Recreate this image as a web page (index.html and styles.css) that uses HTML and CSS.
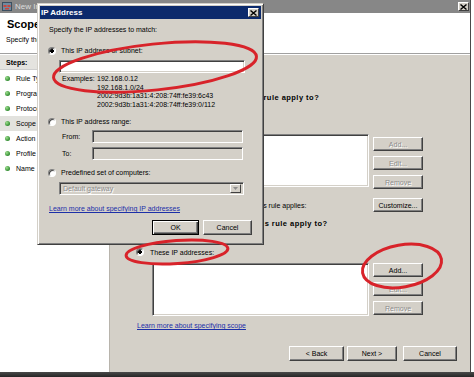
FILE: index.html
```html
<!DOCTYPE html>
<html lang="en">
<head>
    <meta charset="UTF-8">
    <title>New Inbound Rule Wizard - IP Address</title>
    <link rel="stylesheet" href="styles.css">
</head>
<body>
<div class="desk">
    <div class="win">
        <div class="win-title">
            <svg class="app-icon" width="10" height="9" viewBox="0 0 10 9">
                <rect x="0.5" y="0.5" width="9" height="8" fill="#6f8aa0" stroke="#3b4f60"/>
                <rect x="1.5" y="3" width="3" height="2" fill="#c8463c"/>
                <rect x="5.5" y="3" width="3" height="2" fill="#c8463c"/>
                <rect x="3" y="6" width="4" height="1.5" fill="#c8463c"/>
            </svg>
            <span class="win-caption">New Inbound Rule Wizard</span>
            <span class="win-close">
                <svg width="7" height="6" viewBox="0 0 7 6"><path d="M0.5 0.5L6.5 5.5M6.5 0.5L0.5 5.5" stroke="#000" stroke-width="1.4"/></svg>
            </span>
        </div>
        <div class="win-head">
            <div class="head-title">Scope</div>
            <div class="head-sub">Specify the local and remote IP addresses to which this rule applies.</div>
        </div>
        <div class="win-body">
            <div class="steps">
                <div class="steps-head">Steps:</div>
                <ul class="step-list">
                    <li><span class="dot"></span>Rule Type</li>
                    <li><span class="dot"></span>Program</li>
                    <li><span class="dot"></span>Protocol and Ports</li>
                    <li class="current"><span class="dot"></span>Scope</li>
                    <li><span class="dot"></span>Action</li>
                    <li><span class="dot"></span>Profile</li>
                    <li><span class="dot"></span>Name</li>
                </ul>
            </div>
            <div class="pane">
                <div class="q">Which local IP addresses does this rule apply to?</div>
                <div class="choices">
                    <div class="opt"><span class="radio on"></span>Any IP address</div>
                    <div class="opt"><span class="radio"></span>These IP addresses:</div>
                </div>
                <div class="addr-row">
                    <div class="field addr-list"></div>
                    <div class="side-btns top">
                        <button class="btn off">Add...</button>
                        <button class="btn off">Edit...</button>
                        <button class="btn off">Remove</button>
                    </div>
                </div>
                <div class="custom-row">
                    <span>Customize the interface types to which this rule applies:</span>
                    <button class="btn">Customize...</button>
                </div>
                <div class="q q2">Which remote IP addresses does this rule apply to?</div>
                <div class="choices low">
                    <div class="opt"><span class="radio"></span>Any IP address</div>
                    <div class="opt"><span class="radio on"></span>These IP addresses:</div>
                </div>
                <div class="addr-row">
                    <div class="field addr-list"></div>
                    <div class="side-btns">
                        <button class="btn">Add...</button>
                        <button class="btn off">Edit...</button>
                        <button class="btn off">Remove</button>
                    </div>
                </div>
                <a class="link pane-link" href="#">Learn more about specifying scope</a>
                <div class="nav">
                    <button class="btn nav-back">&lt; Back</button>
                    <button class="btn nav-next">Next &gt;</button>
                    <button class="btn nav-cancel">Cancel</button>
                </div>
            </div>
        </div>
    </div>
    <div class="bottom-strip"></div>

    <!-- IP Address dialog on top of the wizard -->
    <div class="dialog">
        <div class="dlg-title">
            <span>IP Address</span>
            <span class="dlg-close">
                <svg width="7" height="6" viewBox="0 0 7 6"><path d="M0.5 0.5L6.5 5.5M6.5 0.5L0.5 5.5" stroke="#000" stroke-width="1.4"/></svg>
            </span>
        </div>
        <div class="dlg-body">
            <div class="intro">Specify the IP addresses to match:</div>
            <div class="opt dlg-opt first"><span class="radio on"></span>This IP address or subnet:</div>
            <div class="field subnet"></div>
            <div class="examples">
                <span>Examples:</span><span>192.168.0.12</span>
                <span></span><span>192.168.1.0/24</span>
                <span></span><span>2002:9d3b:1a31:4:208:74ff:fe39:6c43</span>
                <span></span><span>2002:9d3b:1a31:4:208:74ff:fe39:0/112</span>
            </div>
            <div class="opt dlg-opt"><span class="radio"></span>This IP address range:</div>
            <div class="range-row">
                <span class="range-label">From:</span>
                <div class="field dim range-input"></div>
            </div>
            <div class="range-row">
                <span class="range-label">To:</span>
                <div class="field dim range-input"></div>
            </div>
            <div class="opt dlg-opt"><span class="radio"></span>Predefined set of computers:</div>
            <div class="field dim combo">
                <span class="combo-text">Default gateway</span>
                <span class="combo-btn">
                    <svg width="5" height="3" viewBox="0 0 5 3"><path d="M0 0H5L2.5 3Z" fill="#8c8c8c"/></svg>
                </span>
            </div>
            <a class="link dlg-link" href="#">Learn more about specifying IP addresses</a>
            <div class="dlg-btns">
                <button class="btn btn-default ok">OK</button>
                <button class="btn cancel">Cancel</button>
            </div>
        </div>
    </div>

    <!-- red marker rings -->
    <svg class="marks" width="474" height="377" viewBox="0 0 474 377">
        <ellipse cx="155" cy="67" rx="102" ry="23" transform="rotate(-6 155 67)"/>
        <ellipse cx="177" cy="252" rx="51" ry="11.5" transform="rotate(-4 177 252)"/>
        <ellipse cx="402" cy="266" rx="40" ry="21" transform="rotate(-10 402 266)"/>
    </svg>
</div>
</body>
</html>
```

FILE: styles.css
```css
* {
    box-sizing: border-box;
}
body {
    margin: 0;
    background: #fff;
    font-family: "Liberation Sans", Arial, sans-serif;
    font-size: 7px;
    color: #000;
}
.desk {
    position: relative;
    width: 474px;
    height: 377px;
    overflow: hidden;
}
/* background wizard window */
.win {
    width: 471px;
    height: 372px;
    display: flex;
    flex-direction: column;
    background: #d4d0c8;
    border-right: 1px solid #4a4a4a;
}
.win-title {
    height: 13px;
    background: #878787;
    display: flex;
    align-items: center;
    padding: 0 1px 0 2px;
}
.app-icon {
    flex: none;
}
.win-caption {
    flex: 1;
    margin-left: 3px;
    color: #dedede;
    font-size: 8px;
    white-space: nowrap;
}
.win-close, .dlg-close {
    width: 11px;
    height: 9px;
    display: flex;
    align-items: center;
    justify-content: center;
    background: #d4d0c8;
    border: 1px solid;
    border-color: #fff #404040 #404040 #fff;
}
.win-head {
    height: 41px;
    background: #fff;
    border-bottom: 1px solid #a0a0a0;
    padding: 5px 6px 0;
}
.head-title {
    font-size: 11px;
    font-weight: bold;
    line-height: 12px;
    padding-left: 1px;
}
.head-sub {
    margin-top: 5px;
    line-height: 9px;
    white-space: nowrap;
}
.win-body {
    flex: 1;
    display: flex;
    border-top: 1px solid #fff;
}
.steps {
    width: 110px;
    background: #fff;
    border-right: 1px solid #b8b4ac;
}
.steps-head {
    height: 15px;
    line-height: 15px;
    padding-left: 6px;
    font-weight: bold;
    background: #e4e3df;
    border-bottom: 1px solid #cfcfcf;
}
.step-list {
    list-style: none;
    margin: 0;
    padding: 1px 0 0;
}
.step-list li {
    height: 15px;
    display: flex;
    align-items: center;
    white-space: nowrap;
}
.step-list li.current {
    background: #e2e2de;
}
.dot {
    width: 5px;
    height: 5px;
    margin: 0 6px 0 5px;
    border-radius: 50%;
    background: radial-gradient(circle at 35% 35%, #9fe08f, #2f8a2f 70%);
}
.pane {
    flex: 1;
    padding: 38px 13px 0 10px;
    white-space: nowrap;
}
.q {
    height: 10px;
    line-height: 10px;
    font-size: 7.5px;
    font-weight: bold;
    letter-spacing: 0.47px;
}
.q2 {
    margin-top: 7px;
}
.choices {
    margin: 2px 0 0 16px;
}
.choices.low {
    margin-top: 5px;
}
.opt {
    height: 12px;
    display: flex;
    align-items: center;
}
.radio {
    width: 8px;
    height: 8px;
    margin-right: 6px;
    border-radius: 50%;
    background: #fff;
    border: 1px solid;
    border-color: #808080 #fff #fff #808080;
    box-shadow: inset 1px 1px #404040;
    flex: none;
}
.radio.on {
    background: radial-gradient(circle, #000 1.6px, #fff 2px);
}
.addr-row {
    display: flex;
    gap: 4px;
    margin: 5px 34px 0 32px;
}
.addr-list {
    flex: 1;
    height: 53px;
}
.side-btns {
    width: 50px;
    display: flex;
    flex-direction: column;
    gap: 5px;
}
.side-btns.top {
    padding-top: 3px;
}
.side-btns .btn {
    height: 14px;
}
.custom-row {
    height: 14px;
    margin: 9px 34px 0 14px;
    display: flex;
    align-items: center;
    justify-content: space-between;
}
.custom-row .btn {
    width: 50px;
    height: 14px;
}
.pane-link {
    display: block;
    width: max-content;
    margin: 5px 0 0 17px;
    line-height: 10px;
}
.nav {
    margin-top: 15px;
    display: flex;
    justify-content: flex-end;
    gap: 3px;
}
.nav .btn {
    height: 15px;
}
.nav-back {
    width: 55px;
}
.nav-next {
    width: 50px;
}
.nav-cancel {
    width: 54px;
    margin-left: 3px;
}
.bottom-strip {
    height: 5px;
    background: linear-gradient(#4a4a4a, #262626);
}
/* classic controls */
.btn {
    font: 7px "Liberation Sans", Arial, sans-serif;
    color: #000;
    background: #d4d0c8;
    border: 1px solid;
    border-color: #fff #404040 #404040 #fff;
    box-shadow: inset -1px -1px #808080;
    padding: 0;
}
.btn.off {
    color: #8c8c8c;
    text-shadow: 1px 1px 0 #fff;
}
.btn-default {
    border-color: #000;
    box-shadow: inset 1px 1px #fff, inset -1px -1px #404040, inset -2px -2px #808080;
}
.field {
    background: #fff;
    border: 1px solid;
    border-color: #808080 #fff #fff #808080;
    box-shadow: inset 1px 1px #404040, inset -1px -1px #d4d0c8;
}
.field.dim {
    background: #d4d0c8;
}
.link {
    color: #1c2fa8;
    text-decoration: underline;
}
/* IP Address dialog */
.dialog {
    position: absolute;
    left: 37px;
    top: 3px;
    width: 227px;
    height: 242px;
    background: #d4d0c8;
    border: 1px solid;
    border-color: #d4d0c8 #404040 #404040 #d4d0c8;
    box-shadow: inset 1px 1px #fff, inset -1px -1px #808080;
    padding: 2px;
    white-space: nowrap;
}
.dlg-title {
    height: 13px;
    background: #0c2a6c;
    color: #fff;
    font-size: 8px;
    font-weight: bold;
    display: flex;
    align-items: center;
    justify-content: space-between;
    padding: 0 2px 0 1px;
}
.dlg-body {
    padding: 0 9px;
}
.intro {
    margin-top: 6px;
    line-height: 9px;
}
.dlg-opt {
    height: 9px;
    margin: 8px 0 0 -1px;
}
.dlg-opt.first {
    margin-top: 12px;
}
.dlg-opt .radio {
    margin-right: 5px;
}
.subnet {
    width: 186px;
    height: 13px;
    margin: 5px 0 0 10px;
}
.examples {
    display: grid;
    grid-template-columns: 35px auto;
    margin: 2px 0 0 13px;
    line-height: 8.5px;
}
.range-row {
    display: flex;
    align-items: center;
    margin: 4px 0 0 13px;
}
.range-label {
    width: 30px;
}
.range-input {
    width: 151px;
    height: 13px;
}
.combo {
    width: 185px;
    height: 13px;
    margin: 5px 0 0 10px;
    display: flex;
    align-items: center;
    padding: 0 2px 0 3px;
}
.combo-text {
    flex: 1;
    color: #8c8c8c;
    text-shadow: 1px 1px 0 #fff;
}
.combo-btn {
    width: 11px;
    height: 9px;
    display: flex;
    align-items: center;
    justify-content: center;
    border: 1px solid;
    border-color: #fff #404040 #404040 #fff;
}
.dlg-link {
    display: block;
    width: max-content;
    margin-top: 9px;
    line-height: 9px;
}
.dlg-btns {
    margin-top: 7px;
    display: flex;
    justify-content: flex-end;
    gap: 4px;
}
.dlg-btns .btn {
    height: 15px;
}
.ok {
    width: 47px;
}
.cancel {
    width: 49px;
}
/* red marker rings drawn over the screenshot */
.marks {
    position: absolute;
    left: 0;
    top: 0;
    pointer-events: none;
}
.marks ellipse {
    fill: none;
    stroke: #d8232a;
    stroke-width: 3;
}
```
